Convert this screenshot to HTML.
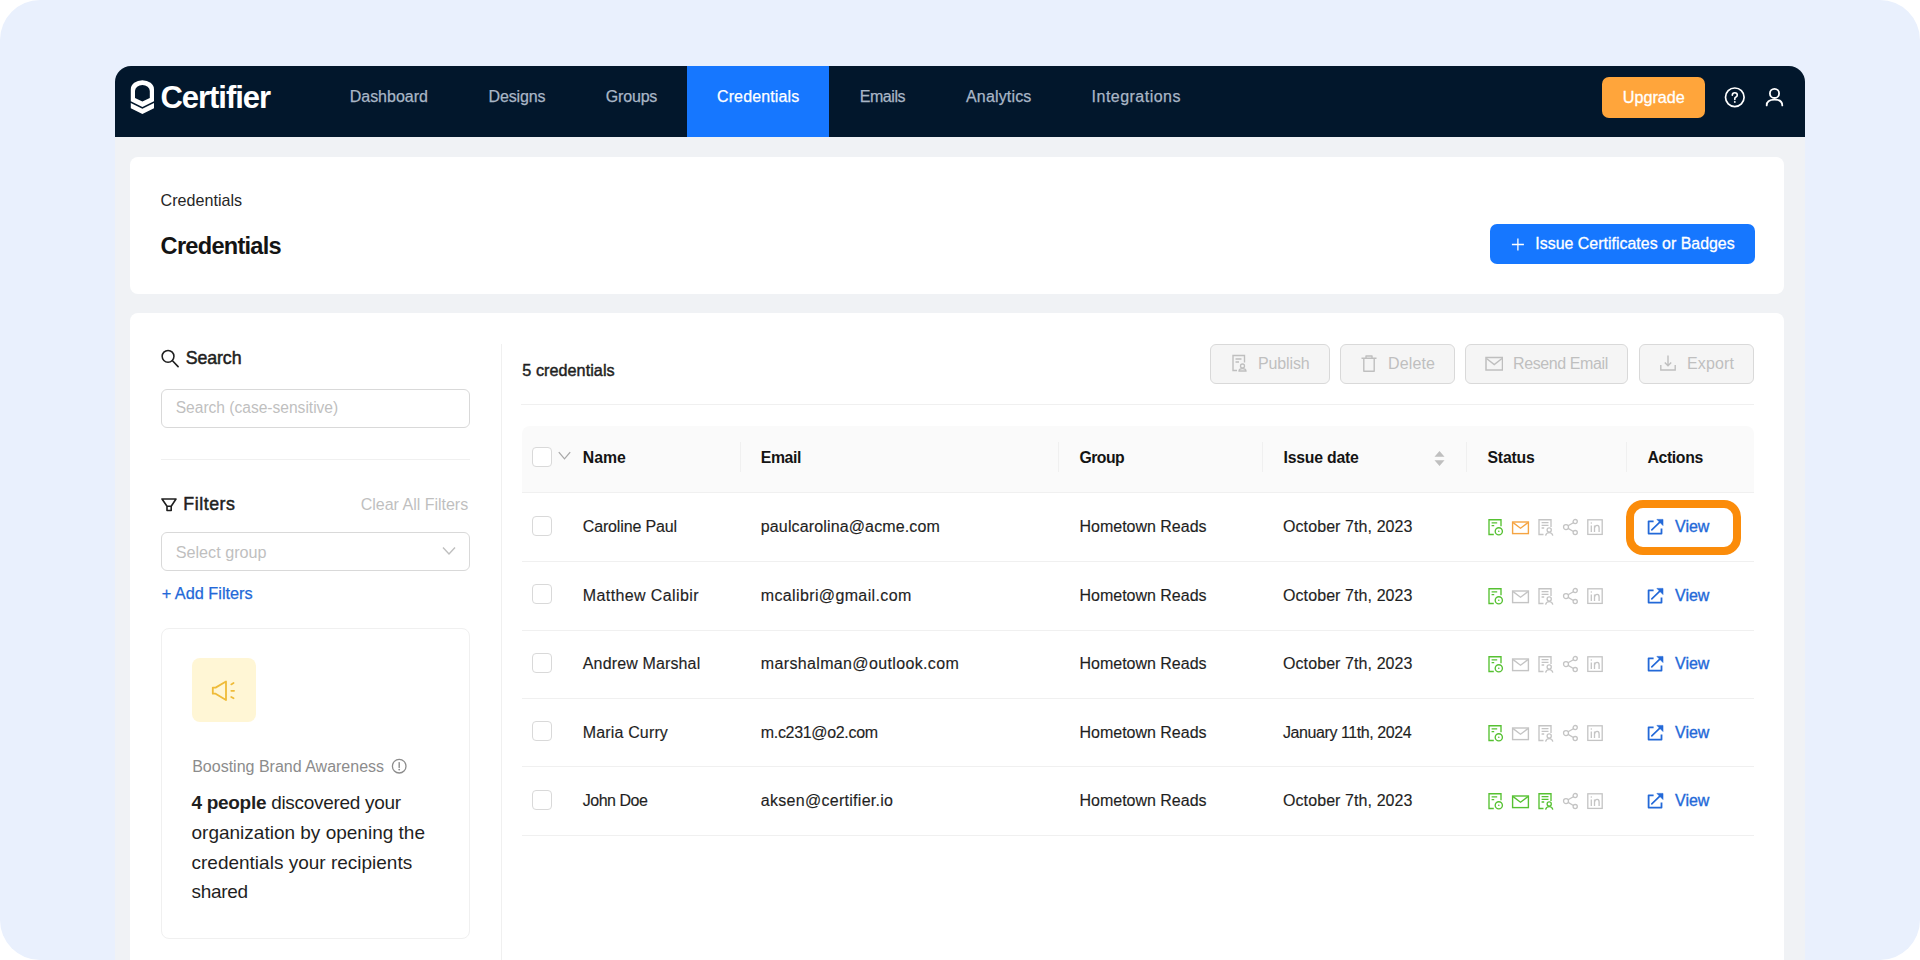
<!DOCTYPE html>
<html><head><meta charset="utf-8"><title>Certifier Credentials</title>
<style>
html,body{margin:0;padding:0;}
body{width:1920px;height:960px;overflow:hidden;position:relative;background:#fff;font-family:"Liberation Sans",sans-serif;}
.t{position:absolute;white-space:nowrap;}
.b{position:absolute;}
</style></head><body>
<div class="b" style="left:0px;top:0px;width:1920px;height:960px;background:#e9f0fd;border-radius:40px;"></div>
<div class="b" style="left:115px;top:66px;width:1690px;height:894px;background:#f0f2f5;border-radius:16px 16px 0 0;"></div>
<div class="b" style="left:115px;top:66px;width:1690px;height:71px;background:#02172c;border-radius:16px 16px 0 0;"></div>
<div class="b" style="left:687px;top:66px;width:142px;height:71px;background:#1677ff;"></div>
<svg class="b" style="left:130px;top:80px;" width="25" height="35" viewBox="0 0 25 35" fill="none"><path fill="#fff" fill-rule="evenodd" d="M0.8,21.3 V9.2 A11.6,9 0 0 1 24,9.2 V21.3 L12.4,27.1 Z M5,17.9 V11 A7.4,6 0 0 1 19.8,11 V17.9 L12.4,21.6 Z"/><path fill="#fff" d="M0.8,23 L12.4,28.8 L24,23 V28.2 L12.4,34 L0.8,28.2 Z"/></svg>
<div class="t" style="left:160.5px;top:83.10px;font-size:31px;line-height:30px;font-weight:700;color:#fff;letter-spacing:-1.05px;">Certifier</div>
<div class="t" style="left:349.7px;top:87.30px;font-size:16px;line-height:20px;font-weight:400;color:#a9b6c6;letter-spacing:-0.006px;-webkit-text-stroke:0.25px currentColor;">Dashboard</div>
<div class="t" style="left:488.5px;top:87.30px;font-size:16px;line-height:20px;font-weight:400;color:#a9b6c6;letter-spacing:-0.142px;-webkit-text-stroke:0.25px currentColor;">Designs</div>
<div class="t" style="left:605.8px;top:87.30px;font-size:16px;line-height:20px;font-weight:400;color:#a9b6c6;letter-spacing:-0.18px;-webkit-text-stroke:0.25px currentColor;">Groups</div>
<div class="t" style="left:717px;top:87.30px;font-size:16px;line-height:20px;font-weight:400;color:#fff;letter-spacing:0.12px;-webkit-text-stroke:0.25px currentColor;">Credentials</div>
<div class="t" style="left:859.7px;top:87.30px;font-size:16px;line-height:20px;font-weight:400;color:#a9b6c6;letter-spacing:-0.42px;-webkit-text-stroke:0.25px currentColor;">Emails</div>
<div class="t" style="left:966px;top:87.30px;font-size:16px;line-height:20px;font-weight:400;color:#a9b6c6;letter-spacing:0.162px;-webkit-text-stroke:0.25px currentColor;">Analytics</div>
<div class="t" style="left:1091.6px;top:87.30px;font-size:16px;line-height:20px;font-weight:400;color:#a9b6c6;letter-spacing:0.473px;-webkit-text-stroke:0.25px currentColor;">Integrations</div>
<div class="b" style="left:1602px;top:77px;width:103px;height:41px;background:#ffa53b;border-radius:7px;"></div>
<div class="t" style="left:1622.7px;top:86.80px;font-size:16.2px;line-height:20px;font-weight:400;color:#fff;letter-spacing:0.008px;-webkit-text-stroke:0.3px #fff;">Upgrade</div>
<svg class="b" style="left:1724px;top:87px;" width="22" height="22" viewBox="0 0 22 22" fill="none"><circle cx="10.8" cy="10.3" r="9.3" stroke="#fff" stroke-width="1.7"/><path d="M8.3,8.2 Q8.3,5.8 10.8,5.8 Q13.3,5.8 13.3,8.1 Q13.3,9.6 11.7,10.3 Q10.8,10.7 10.8,11.8 L10.8,12.4" stroke="#fff" stroke-width="1.6" stroke-linecap="round"/><circle cx="10.8" cy="14.9" r="0.95" fill="#fff"/></svg>
<svg class="b" style="left:1764px;top:86px;" width="22" height="22" viewBox="0 0 22 22" fill="none"><circle cx="10.5" cy="7.4" r="4.6" stroke="#fff" stroke-width="1.8"/><path d="M2.7,19.4 C2.7,15.5 6.2,13.6 10.5,13.6 C14.8,13.6 18.3,15.5 18.3,19.4" stroke="#fff" stroke-width="1.8" stroke-linecap="round"/></svg>
<div class="b" style="left:130px;top:157px;width:1654px;height:137px;background:#fff;border-radius:8px;"></div>
<div class="t" style="left:160.6px;top:190.00px;font-size:16.1px;line-height:20px;font-weight:400;color:#262626;letter-spacing:0.01px;">Credentials</div>
<div class="t" style="left:160.6px;top:231.60px;font-size:23.6px;line-height:28px;font-weight:700;color:#141414;letter-spacing:-0.74px;">Credentials</div>
<div class="b" style="left:1490px;top:224px;width:265px;height:40px;background:#1677ff;border-radius:7px;"></div>
<svg class="b" style="left:1511px;top:238px;" width="14" height="14" viewBox="0 0 14 14" fill="none"><path d="M6.9,0.5 V12.5 M0.9,6.5 H12.9" stroke="#fff" stroke-width="1.3"/></svg>
<div class="t" style="left:1535.3px;top:234.00px;font-size:15.9px;line-height:20px;font-weight:400;color:#fff;letter-spacing:0.024px;-webkit-text-stroke:0.3px #fff;">Issue Certificates or Badges</div>
<div class="b" style="left:130px;top:313px;width:1654px;height:700px;background:#fff;border-radius:8px;"></div>
<svg class="b" style="left:160px;top:349px;" width="20" height="20" viewBox="0 0 20 20" fill="none"><circle cx="8.05" cy="7.3" r="5.9" stroke="#1f1f1f" stroke-width="1.55"/><path d="M12.5,11.8 L18.1,17.6" stroke="#1f1f1f" stroke-width="1.65" stroke-linecap="round"/></svg>
<div class="t" style="left:185.7px;top:348.00px;font-size:17.8px;line-height:20px;font-weight:400;color:#1f1f1f;letter-spacing:-0.1px;-webkit-text-stroke:0.5px #1f1f1f;">Search</div>
<div class="b" style="left:161px;top:389px;width:309px;height:39px;border:1px solid #d9d9d9;border-radius:6px;box-sizing:border-box;"></div>
<div class="t" style="left:175.7px;top:398.00px;font-size:15.6px;line-height:20px;font-weight:400;color:#bfbfbf;letter-spacing:-0.018px;">Search (case-sensitive)</div>
<div class="b" style="left:161px;top:459px;width:309px;height:1px;background:#f0f0f0;"></div>
<svg class="b" style="left:160px;top:496px;" width="18" height="18" viewBox="0 0 18 18" fill="none"><path d="M2,3 H16 L11.2,10.2 V14.5 H7 V10.2 Z M7,10.2 H11.2" stroke="#1f1f1f" stroke-width="1.6" stroke-linejoin="round"/></svg>
<div class="t" style="left:183.3px;top:494.00px;font-size:17.8px;line-height:20px;font-weight:400;color:#1f1f1f;letter-spacing:0.533px;-webkit-text-stroke:0.5px #1f1f1f;">Filters</div>
<div class="t" style="left:360.7px;top:494.00px;font-size:16.06px;line-height:20px;font-weight:400;color:#bfbfbf;letter-spacing:-0.025px;">Clear All Filters</div>
<div class="b" style="left:161px;top:532px;width:309px;height:39px;border:1px solid #d9d9d9;border-radius:6px;box-sizing:border-box;"></div>
<div class="t" style="left:175.7px;top:541.50px;font-size:16.2px;line-height:20px;font-weight:400;color:#bfbfbf;letter-spacing:0.0px;">Select group</div>
<svg class="b" style="left:442px;top:545px;" width="14" height="12" viewBox="0 0 14 12" fill="none"><path d="M1,2.5 L7,9 L13,2.5" stroke="#bfbfbf" stroke-width="1.4"/></svg>
<div class="t" style="left:161.7px;top:583.30px;font-size:16.3px;line-height:20px;font-weight:400;color:#2369d8;letter-spacing:0.0px;-webkit-text-stroke:0.25px currentColor;">+ Add Filters</div>
<div class="b" style="left:161px;top:628px;width:309px;height:311px;border:1px solid #f0f0f0;border-radius:8px;box-sizing:border-box;"></div>
<div class="b" style="left:192px;top:658px;width:64px;height:64px;background:#fff6d5;border-radius:8px;"></div>
<svg class="b" style="left:210px;top:679px;" width="28" height="24" viewBox="0 0 28 24" fill="none"><path d="M2.8,8.6 H5.6 L16,2.5 V21 L5.6,14.7 H2.8 Z" stroke="#efbb38" stroke-width="1.8" stroke-linejoin="round"/><path d="M21.2,5.4 L23.6,4 M21.3,11.8 H24.1 M21.2,17.9 L23.6,19.3" stroke="#efbb38" stroke-width="1.7" stroke-linecap="round"/></svg>
<div class="t" style="left:192.2px;top:756.80px;font-size:16px;line-height:20px;font-weight:400;color:#8c8c8c;letter-spacing:0.002px;">Boosting Brand Awareness</div>
<svg class="b" style="left:391px;top:758px;" width="17" height="17" viewBox="0 0 17 17" fill="none"><circle cx="8.2" cy="8.2" r="6.8" stroke="#8c8c8c" stroke-width="1.3"/><path d="M8.2,4.6 V9.4" stroke="#8c8c8c" stroke-width="1.4" stroke-linecap="round"/><circle cx="8.2" cy="11.6" r="0.9" fill="#8c8c8c"/></svg>
<div class="t" style="left:191.5px;top:787.7px;width:270px;font-size:19px;line-height:29.9px;color:#1f1f1f;white-space:normal;"><span style="letter-spacing:-0.3px"><b>4 people</b> discovered your</span><br>organization by opening the<br>credentials your recipients<br><span style="letter-spacing:-0.3px">shared</span></div>
<div class="b" style="left:501px;top:344px;width:1px;height:616px;background:#f0f0f0;"></div>
<div class="t" style="left:522.3px;top:360.00px;font-size:16.2px;line-height:20px;font-weight:400;color:#1f1f1f;letter-spacing:0.046px;-webkit-text-stroke:0.45px #1f1f1f;">5 credentials</div>
<div class="b" style="left:1210px;top:344px;width:120px;height:40px;background:#f5f5f5;border:1px solid #d9d9d9;border-radius:6px;box-sizing:border-box;"></div>
<svg class="b" style="left:1231px;top:354px;" width="18" height="18" viewBox="0 0 18 18" fill="none"><path d="M13.5,8.5 V1.5 H2 V16.5 H6" stroke="#bfbfbf" stroke-width="1.4"/><path d="M4.5,5 H10.5 M4.5,8 H8" stroke="#bfbfbf" stroke-width="1.4"/><circle cx="11.5" cy="12" r="2" stroke="#bfbfbf" stroke-width="1.3"/><path d="M8,17 Q8,14.6 11.5,14.6 Q15,14.6 15,17 Z" stroke="#bfbfbf" stroke-width="1.3"/></svg>
<div class="t" style="left:1258px;top:353.90px;font-size:16px;line-height:20px;font-weight:400;color:#bfbfbf;letter-spacing:-0.133px;">Publish</div>
<div class="b" style="left:1340px;top:344px;width:115px;height:40px;background:#f5f5f5;border:1px solid #d9d9d9;border-radius:6px;box-sizing:border-box;"></div>
<svg class="b" style="left:1359.5px;top:354px;" width="18" height="18" viewBox="0 0 18 18" fill="none"><path d="M1.5,4.3 H16.5 M6,4.3 V2 H12 V4.3 M3.8,4.3 V17.2 H14.2 V4.3" stroke="#bfbfbf" stroke-width="1.4" stroke-linejoin="round"/></svg>
<div class="t" style="left:1388px;top:353.90px;font-size:16px;line-height:20px;font-weight:400;color:#bfbfbf;letter-spacing:0.15px;">Delete</div>
<div class="b" style="left:1465px;top:344px;width:163px;height:40px;background:#f5f5f5;border:1px solid #d9d9d9;border-radius:6px;box-sizing:border-box;"></div>
<svg class="b" style="left:1484.5px;top:354px;" width="18" height="18" viewBox="0 0 18 18" fill="none"><rect x="1" y="3.5" width="16.5" height="12.5" stroke="#bfbfbf" stroke-width="1.5"/><path d="M1.5,4.5 L9.25,10.5 L17,4.5" stroke="#bfbfbf" stroke-width="1.5"/></svg>
<div class="t" style="left:1513.1px;top:353.90px;font-size:16px;line-height:20px;font-weight:400;color:#bfbfbf;letter-spacing:-0.409px;">Resend Email</div>
<div class="b" style="left:1639px;top:344px;width:115px;height:40px;background:#f5f5f5;border:1px solid #d9d9d9;border-radius:6px;box-sizing:border-box;"></div>
<svg class="b" style="left:1658.5px;top:354px;" width="18" height="18" viewBox="0 0 18 18" fill="none"><path d="M9,1.5 V11.5 M5.8,8.5 L9,11.7 L12.2,8.5 M1.8,11 V16 H16.2 V11" stroke="#bfbfbf" stroke-width="1.4"/></svg>
<div class="t" style="left:1687px;top:353.90px;font-size:16px;line-height:20px;font-weight:400;color:#bfbfbf;letter-spacing:0.15px;">Export</div>
<div class="b" style="left:521px;top:404px;width:1233px;height:1px;background:#f0f0f0;"></div>
<div class="b" style="left:522px;top:426px;width:1232px;height:67px;background:#fafafa;border-radius:8px 8px 0 0;border-bottom:1px solid #f0f0f0;box-sizing:border-box;"></div>
<div class="b" style="left:532px;top:447px;width:20px;height:20px;background:#fff;border:1px solid #d9d9d9;border-radius:4px;box-sizing:border-box;"></div>
<svg class="b" style="left:557px;top:450px;" width="15" height="12" viewBox="0 0 15 12" fill="none"><path d="M1.8,2.2 L7.5,8.8 L13.2,2.2" stroke="#a8a8a8" stroke-width="1.3"/></svg>
<div class="b" style="left:740px;top:442px;width:1px;height:30px;background:#f0f0f0;"></div>
<div class="b" style="left:1058px;top:442px;width:1px;height:30px;background:#f0f0f0;"></div>
<div class="b" style="left:1262px;top:442px;width:1px;height:30px;background:#f0f0f0;"></div>
<div class="b" style="left:1466px;top:442px;width:1px;height:30px;background:#f0f0f0;"></div>
<div class="b" style="left:1626px;top:442px;width:1px;height:30px;background:#f0f0f0;"></div>
<div class="t" style="left:582.7px;top:448.30px;font-size:15.8px;line-height:20px;font-weight:700;color:#141414;letter-spacing:0.033px;">Name</div>
<div class="t" style="left:760.8px;top:448.30px;font-size:15.8px;line-height:20px;font-weight:700;color:#141414;letter-spacing:-0.387px;">Email</div>
<div class="t" style="left:1079.4px;top:448.30px;font-size:15.8px;line-height:20px;font-weight:700;color:#141414;letter-spacing:-0.5px;">Group</div>
<div class="t" style="left:1283.6px;top:448.30px;font-size:15.8px;line-height:20px;font-weight:700;color:#141414;letter-spacing:-0.228px;">Issue date</div>
<div class="t" style="left:1487.5px;top:448.30px;font-size:15.8px;line-height:20px;font-weight:700;color:#141414;letter-spacing:-0.21px;">Status</div>
<div class="t" style="left:1647.5px;top:448.30px;font-size:15.8px;line-height:20px;font-weight:700;color:#141414;letter-spacing:-0.367px;">Actions</div>
<svg class="b" style="left:1433px;top:450px;" width="13" height="17" viewBox="0 0 13 17" fill="none"><path d="M6.5,1 L11.5,6.8 H1.5 Z M6.5,16 L11.5,10.2 H1.5 Z" fill="#bfbfbf"/></svg>
<div class="b" style="left:522px;top:561px;width:1232px;height:1px;background:#f0f0f0;"></div>
<div class="b" style="left:532px;top:516px;width:20px;height:20px;background:#fff;border:1px solid #d9d9d9;border-radius:4px;box-sizing:border-box;"></div>
<div class="t" style="left:582.8px;top:517.30px;font-size:16px;line-height:20px;font-weight:400;color:#1f1f1f;letter-spacing:-0.158px;-webkit-text-stroke:0.15px #1f1f1f;">Caroline Paul</div>
<div class="t" style="left:760.8px;top:517.30px;font-size:16px;line-height:20px;font-weight:400;color:#1f1f1f;letter-spacing:0.138px;-webkit-text-stroke:0.15px #1f1f1f;">paulcarolina@acme.com</div>
<div class="t" style="left:1079.5px;top:517.30px;font-size:16px;line-height:20px;font-weight:400;color:#1f1f1f;letter-spacing:-0.012px;-webkit-text-stroke:0.15px #1f1f1f;">Hometown Reads</div>
<div class="t" style="left:1283px;top:517.30px;font-size:16px;line-height:20px;font-weight:400;color:#1f1f1f;letter-spacing:0.088px;-webkit-text-stroke:0.15px #1f1f1f;">October 7th, 2023</div>
<svg class="b" style="left:1487px;top:518.0px;" width="18" height="18" viewBox="0 0 18 18" fill="none"><path d="M14,8.2 V1.7 H2 V16.5 H6.8" stroke="#56c132" stroke-width="1.35"/><path d="M4.6,4.8 H10.2 M4.6,7.6 H7.2" stroke="#56c132" stroke-width="1.3"/><circle cx="11.8" cy="13.3" r="3.6" stroke="#56c132" stroke-width="1.35"/><circle cx="11.8" cy="13.3" r="0.8" fill="#56c132"/></svg>
<svg class="b" style="left:1511px;top:518.0px;" width="19" height="18" viewBox="0 0 19 18" fill="none"><rect x="1.6" y="4" width="15.8" height="11.6" stroke="#f5a442" stroke-width="1.4"/><path d="M2.1,4.6 L9.5,10.2 L16.9,4.6" stroke="#f5a442" stroke-width="1.35"/></svg>
<svg class="b" style="left:1537px;top:518.0px;" width="18" height="18" viewBox="0 0 18 18" fill="none"><path d="M14,9 V1.7 H2 V16.5 H6.5" stroke="#c4c4c4" stroke-width="1.35"/><path d="M4.6,4.6 H11.5 M4.6,7.3 H11.5 M4.6,10 H7.2" stroke="#c4c4c4" stroke-width="1.3"/><circle cx="12.2" cy="12" r="2.1" stroke="#c4c4c4" stroke-width="1.3"/><path d="M8.6,17.6 Q9.2,14.6 12.2,14.6 Q15.2,14.6 15.8,17.6" stroke="#c4c4c4" stroke-width="1.3"/></svg>
<svg class="b" style="left:1562px;top:518.0px;" width="17" height="18" viewBox="0 0 17 18" fill="none"><circle cx="4" cy="9.1" r="2.5" stroke="#c4c4c4" stroke-width="1.3"/><circle cx="13.2" cy="3.6" r="2.1" stroke="#c4c4c4" stroke-width="1.3"/><circle cx="13.2" cy="14.6" r="2.1" stroke="#c4c4c4" stroke-width="1.3"/><path d="M6.1,7.8 L11.4,4.7 M6.1,10.4 L11.4,13.5" stroke="#c4c4c4" stroke-width="1.3"/></svg>
<svg class="b" style="left:1586px;top:518.0px;" width="18" height="18" viewBox="0 0 18 18" fill="none"><rect x="1.8" y="1.8" width="14.4" height="14.6" stroke="#c4c4c4" stroke-width="1.3"/><path d="M5.3,7.5 V14 M8.5,14 V7.5 M8.5,10 Q9.1,7.4 11.1,7.4 Q13.1,7.4 13.1,10 V14" stroke="#c4c4c4" stroke-width="1.3"/><circle cx="5.3" cy="5" r="0.75" fill="#c4c4c4"/></svg>
<svg class="b" style="left:1646px;top:517.3px;" width="19" height="19" viewBox="0 0 19 19" fill="none"><path d="M7.6,4.3 H2.6 V16.6 H15.5 V11.4" stroke="#2369d8" stroke-width="1.8" stroke-linejoin="round"/><path d="M5.8,12.9 L14.6,4.4" stroke="#2369d8" stroke-width="1.6" stroke-linecap="round"/><path d="M10.9,2.4 H17 V8.5 Z" fill="#2369d8" stroke="#2369d8" stroke-width="0.6" stroke-linejoin="round"/></svg>
<div class="t" style="left:1675px;top:517.30px;font-size:16px;line-height:20px;font-weight:400;color:#2369d8;letter-spacing:0.0px;-webkit-text-stroke:0.35px currentColor;">View</div>
<div class="b" style="left:522px;top:630px;width:1232px;height:1px;background:#f0f0f0;"></div>
<div class="b" style="left:532px;top:584px;width:20px;height:20px;background:#fff;border:1px solid #d9d9d9;border-radius:4px;box-sizing:border-box;"></div>
<div class="t" style="left:582.8px;top:585.80px;font-size:16px;line-height:20px;font-weight:400;color:#1f1f1f;letter-spacing:0.389px;-webkit-text-stroke:0.15px #1f1f1f;">Matthew Calibir</div>
<div class="t" style="left:760.8px;top:585.80px;font-size:16px;line-height:20px;font-weight:400;color:#1f1f1f;letter-spacing:0.362px;-webkit-text-stroke:0.15px #1f1f1f;">mcalibri@gmail.com</div>
<div class="t" style="left:1079.5px;top:585.80px;font-size:16px;line-height:20px;font-weight:400;color:#1f1f1f;letter-spacing:-0.012px;-webkit-text-stroke:0.15px #1f1f1f;">Hometown Reads</div>
<div class="t" style="left:1283px;top:585.80px;font-size:16px;line-height:20px;font-weight:400;color:#1f1f1f;letter-spacing:0.088px;-webkit-text-stroke:0.15px #1f1f1f;">October 7th, 2023</div>
<svg class="b" style="left:1487px;top:586.5px;" width="18" height="18" viewBox="0 0 18 18" fill="none"><path d="M14,8.2 V1.7 H2 V16.5 H6.8" stroke="#56c132" stroke-width="1.35"/><path d="M4.6,4.8 H10.2 M4.6,7.6 H7.2" stroke="#56c132" stroke-width="1.3"/><circle cx="11.8" cy="13.3" r="3.6" stroke="#56c132" stroke-width="1.35"/><circle cx="11.8" cy="13.3" r="0.8" fill="#56c132"/></svg>
<svg class="b" style="left:1511px;top:586.5px;" width="19" height="18" viewBox="0 0 19 18" fill="none"><rect x="1.6" y="4" width="15.8" height="11.6" stroke="#c4c4c4" stroke-width="1.4"/><path d="M2.1,4.6 L9.5,10.2 L16.9,4.6" stroke="#c4c4c4" stroke-width="1.35"/></svg>
<svg class="b" style="left:1537px;top:586.5px;" width="18" height="18" viewBox="0 0 18 18" fill="none"><path d="M14,9 V1.7 H2 V16.5 H6.5" stroke="#c4c4c4" stroke-width="1.35"/><path d="M4.6,4.6 H11.5 M4.6,7.3 H11.5 M4.6,10 H7.2" stroke="#c4c4c4" stroke-width="1.3"/><circle cx="12.2" cy="12" r="2.1" stroke="#c4c4c4" stroke-width="1.3"/><path d="M8.6,17.6 Q9.2,14.6 12.2,14.6 Q15.2,14.6 15.8,17.6" stroke="#c4c4c4" stroke-width="1.3"/></svg>
<svg class="b" style="left:1562px;top:586.5px;" width="17" height="18" viewBox="0 0 17 18" fill="none"><circle cx="4" cy="9.1" r="2.5" stroke="#c4c4c4" stroke-width="1.3"/><circle cx="13.2" cy="3.6" r="2.1" stroke="#c4c4c4" stroke-width="1.3"/><circle cx="13.2" cy="14.6" r="2.1" stroke="#c4c4c4" stroke-width="1.3"/><path d="M6.1,7.8 L11.4,4.7 M6.1,10.4 L11.4,13.5" stroke="#c4c4c4" stroke-width="1.3"/></svg>
<svg class="b" style="left:1586px;top:586.5px;" width="18" height="18" viewBox="0 0 18 18" fill="none"><rect x="1.8" y="1.8" width="14.4" height="14.6" stroke="#c4c4c4" stroke-width="1.3"/><path d="M5.3,7.5 V14 M8.5,14 V7.5 M8.5,10 Q9.1,7.4 11.1,7.4 Q13.1,7.4 13.1,10 V14" stroke="#c4c4c4" stroke-width="1.3"/><circle cx="5.3" cy="5" r="0.75" fill="#c4c4c4"/></svg>
<svg class="b" style="left:1646px;top:585.8px;" width="19" height="19" viewBox="0 0 19 19" fill="none"><path d="M7.6,4.3 H2.6 V16.6 H15.5 V11.4" stroke="#2369d8" stroke-width="1.8" stroke-linejoin="round"/><path d="M5.8,12.9 L14.6,4.4" stroke="#2369d8" stroke-width="1.6" stroke-linecap="round"/><path d="M10.9,2.4 H17 V8.5 Z" fill="#2369d8" stroke="#2369d8" stroke-width="0.6" stroke-linejoin="round"/></svg>
<div class="t" style="left:1675px;top:585.80px;font-size:16px;line-height:20px;font-weight:400;color:#2369d8;letter-spacing:0.0px;-webkit-text-stroke:0.35px currentColor;">View</div>
<div class="b" style="left:522px;top:698px;width:1232px;height:1px;background:#f0f0f0;"></div>
<div class="b" style="left:532px;top:653px;width:20px;height:20px;background:#fff;border:1px solid #d9d9d9;border-radius:4px;box-sizing:border-box;"></div>
<div class="t" style="left:582.8px;top:654.30px;font-size:16px;line-height:20px;font-weight:400;color:#1f1f1f;letter-spacing:0.138px;-webkit-text-stroke:0.15px #1f1f1f;">Andrew Marshal</div>
<div class="t" style="left:760.8px;top:654.30px;font-size:16px;line-height:20px;font-weight:400;color:#1f1f1f;letter-spacing:0.352px;-webkit-text-stroke:0.15px #1f1f1f;">marshalman@outlook.com</div>
<div class="t" style="left:1079.5px;top:654.30px;font-size:16px;line-height:20px;font-weight:400;color:#1f1f1f;letter-spacing:-0.012px;-webkit-text-stroke:0.15px #1f1f1f;">Hometown Reads</div>
<div class="t" style="left:1283px;top:654.30px;font-size:16px;line-height:20px;font-weight:400;color:#1f1f1f;letter-spacing:0.088px;-webkit-text-stroke:0.15px #1f1f1f;">October 7th, 2023</div>
<svg class="b" style="left:1487px;top:655.0px;" width="18" height="18" viewBox="0 0 18 18" fill="none"><path d="M14,8.2 V1.7 H2 V16.5 H6.8" stroke="#56c132" stroke-width="1.35"/><path d="M4.6,4.8 H10.2 M4.6,7.6 H7.2" stroke="#56c132" stroke-width="1.3"/><circle cx="11.8" cy="13.3" r="3.6" stroke="#56c132" stroke-width="1.35"/><circle cx="11.8" cy="13.3" r="0.8" fill="#56c132"/></svg>
<svg class="b" style="left:1511px;top:655.0px;" width="19" height="18" viewBox="0 0 19 18" fill="none"><rect x="1.6" y="4" width="15.8" height="11.6" stroke="#c4c4c4" stroke-width="1.4"/><path d="M2.1,4.6 L9.5,10.2 L16.9,4.6" stroke="#c4c4c4" stroke-width="1.35"/></svg>
<svg class="b" style="left:1537px;top:655.0px;" width="18" height="18" viewBox="0 0 18 18" fill="none"><path d="M14,9 V1.7 H2 V16.5 H6.5" stroke="#c4c4c4" stroke-width="1.35"/><path d="M4.6,4.6 H11.5 M4.6,7.3 H11.5 M4.6,10 H7.2" stroke="#c4c4c4" stroke-width="1.3"/><circle cx="12.2" cy="12" r="2.1" stroke="#c4c4c4" stroke-width="1.3"/><path d="M8.6,17.6 Q9.2,14.6 12.2,14.6 Q15.2,14.6 15.8,17.6" stroke="#c4c4c4" stroke-width="1.3"/></svg>
<svg class="b" style="left:1562px;top:655.0px;" width="17" height="18" viewBox="0 0 17 18" fill="none"><circle cx="4" cy="9.1" r="2.5" stroke="#c4c4c4" stroke-width="1.3"/><circle cx="13.2" cy="3.6" r="2.1" stroke="#c4c4c4" stroke-width="1.3"/><circle cx="13.2" cy="14.6" r="2.1" stroke="#c4c4c4" stroke-width="1.3"/><path d="M6.1,7.8 L11.4,4.7 M6.1,10.4 L11.4,13.5" stroke="#c4c4c4" stroke-width="1.3"/></svg>
<svg class="b" style="left:1586px;top:655.0px;" width="18" height="18" viewBox="0 0 18 18" fill="none"><rect x="1.8" y="1.8" width="14.4" height="14.6" stroke="#c4c4c4" stroke-width="1.3"/><path d="M5.3,7.5 V14 M8.5,14 V7.5 M8.5,10 Q9.1,7.4 11.1,7.4 Q13.1,7.4 13.1,10 V14" stroke="#c4c4c4" stroke-width="1.3"/><circle cx="5.3" cy="5" r="0.75" fill="#c4c4c4"/></svg>
<svg class="b" style="left:1646px;top:654.3px;" width="19" height="19" viewBox="0 0 19 19" fill="none"><path d="M7.6,4.3 H2.6 V16.6 H15.5 V11.4" stroke="#2369d8" stroke-width="1.8" stroke-linejoin="round"/><path d="M5.8,12.9 L14.6,4.4" stroke="#2369d8" stroke-width="1.6" stroke-linecap="round"/><path d="M10.9,2.4 H17 V8.5 Z" fill="#2369d8" stroke="#2369d8" stroke-width="0.6" stroke-linejoin="round"/></svg>
<div class="t" style="left:1675px;top:654.30px;font-size:16px;line-height:20px;font-weight:400;color:#2369d8;letter-spacing:0.0px;-webkit-text-stroke:0.35px currentColor;">View</div>
<div class="b" style="left:522px;top:766px;width:1232px;height:1px;background:#f0f0f0;"></div>
<div class="b" style="left:532px;top:721px;width:20px;height:20px;background:#fff;border:1px solid #d9d9d9;border-radius:4px;box-sizing:border-box;"></div>
<div class="t" style="left:582.8px;top:722.80px;font-size:16px;line-height:20px;font-weight:400;color:#1f1f1f;letter-spacing:0.15px;-webkit-text-stroke:0.15px #1f1f1f;">Maria Curry</div>
<div class="t" style="left:760.8px;top:722.80px;font-size:16px;line-height:20px;font-weight:400;color:#1f1f1f;letter-spacing:-0.329px;-webkit-text-stroke:0.15px #1f1f1f;">m.c231@o2.com</div>
<div class="t" style="left:1079.5px;top:722.80px;font-size:16px;line-height:20px;font-weight:400;color:#1f1f1f;letter-spacing:-0.012px;-webkit-text-stroke:0.15px #1f1f1f;">Hometown Reads</div>
<div class="t" style="left:1283px;top:722.80px;font-size:16px;line-height:20px;font-weight:400;color:#1f1f1f;letter-spacing:-0.421px;-webkit-text-stroke:0.15px #1f1f1f;">January 11th, 2024</div>
<svg class="b" style="left:1487px;top:723.5px;" width="18" height="18" viewBox="0 0 18 18" fill="none"><path d="M14,8.2 V1.7 H2 V16.5 H6.8" stroke="#56c132" stroke-width="1.35"/><path d="M4.6,4.8 H10.2 M4.6,7.6 H7.2" stroke="#56c132" stroke-width="1.3"/><circle cx="11.8" cy="13.3" r="3.6" stroke="#56c132" stroke-width="1.35"/><circle cx="11.8" cy="13.3" r="0.8" fill="#56c132"/></svg>
<svg class="b" style="left:1511px;top:723.5px;" width="19" height="18" viewBox="0 0 19 18" fill="none"><rect x="1.6" y="4" width="15.8" height="11.6" stroke="#c4c4c4" stroke-width="1.4"/><path d="M2.1,4.6 L9.5,10.2 L16.9,4.6" stroke="#c4c4c4" stroke-width="1.35"/></svg>
<svg class="b" style="left:1537px;top:723.5px;" width="18" height="18" viewBox="0 0 18 18" fill="none"><path d="M14,9 V1.7 H2 V16.5 H6.5" stroke="#c4c4c4" stroke-width="1.35"/><path d="M4.6,4.6 H11.5 M4.6,7.3 H11.5 M4.6,10 H7.2" stroke="#c4c4c4" stroke-width="1.3"/><circle cx="12.2" cy="12" r="2.1" stroke="#c4c4c4" stroke-width="1.3"/><path d="M8.6,17.6 Q9.2,14.6 12.2,14.6 Q15.2,14.6 15.8,17.6" stroke="#c4c4c4" stroke-width="1.3"/></svg>
<svg class="b" style="left:1562px;top:723.5px;" width="17" height="18" viewBox="0 0 17 18" fill="none"><circle cx="4" cy="9.1" r="2.5" stroke="#c4c4c4" stroke-width="1.3"/><circle cx="13.2" cy="3.6" r="2.1" stroke="#c4c4c4" stroke-width="1.3"/><circle cx="13.2" cy="14.6" r="2.1" stroke="#c4c4c4" stroke-width="1.3"/><path d="M6.1,7.8 L11.4,4.7 M6.1,10.4 L11.4,13.5" stroke="#c4c4c4" stroke-width="1.3"/></svg>
<svg class="b" style="left:1586px;top:723.5px;" width="18" height="18" viewBox="0 0 18 18" fill="none"><rect x="1.8" y="1.8" width="14.4" height="14.6" stroke="#c4c4c4" stroke-width="1.3"/><path d="M5.3,7.5 V14 M8.5,14 V7.5 M8.5,10 Q9.1,7.4 11.1,7.4 Q13.1,7.4 13.1,10 V14" stroke="#c4c4c4" stroke-width="1.3"/><circle cx="5.3" cy="5" r="0.75" fill="#c4c4c4"/></svg>
<svg class="b" style="left:1646px;top:722.8px;" width="19" height="19" viewBox="0 0 19 19" fill="none"><path d="M7.6,4.3 H2.6 V16.6 H15.5 V11.4" stroke="#2369d8" stroke-width="1.8" stroke-linejoin="round"/><path d="M5.8,12.9 L14.6,4.4" stroke="#2369d8" stroke-width="1.6" stroke-linecap="round"/><path d="M10.9,2.4 H17 V8.5 Z" fill="#2369d8" stroke="#2369d8" stroke-width="0.6" stroke-linejoin="round"/></svg>
<div class="t" style="left:1675px;top:722.80px;font-size:16px;line-height:20px;font-weight:400;color:#2369d8;letter-spacing:0.0px;-webkit-text-stroke:0.35px currentColor;">View</div>
<div class="b" style="left:522px;top:835px;width:1232px;height:1px;background:#f0f0f0;"></div>
<div class="b" style="left:532px;top:790px;width:20px;height:20px;background:#fff;border:1px solid #d9d9d9;border-radius:4px;box-sizing:border-box;"></div>
<div class="t" style="left:582.8px;top:791.30px;font-size:16px;line-height:20px;font-weight:400;color:#1f1f1f;letter-spacing:-0.5px;-webkit-text-stroke:0.15px #1f1f1f;">John Doe</div>
<div class="t" style="left:760.8px;top:791.30px;font-size:16px;line-height:20px;font-weight:400;color:#1f1f1f;letter-spacing:0.282px;-webkit-text-stroke:0.15px #1f1f1f;">aksen@certifier.io</div>
<div class="t" style="left:1079.5px;top:791.30px;font-size:16px;line-height:20px;font-weight:400;color:#1f1f1f;letter-spacing:-0.012px;-webkit-text-stroke:0.15px #1f1f1f;">Hometown Reads</div>
<div class="t" style="left:1283px;top:791.30px;font-size:16px;line-height:20px;font-weight:400;color:#1f1f1f;letter-spacing:0.088px;-webkit-text-stroke:0.15px #1f1f1f;">October 7th, 2023</div>
<svg class="b" style="left:1487px;top:792.0px;" width="18" height="18" viewBox="0 0 18 18" fill="none"><path d="M14,8.2 V1.7 H2 V16.5 H6.8" stroke="#56c132" stroke-width="1.35"/><path d="M4.6,4.8 H10.2 M4.6,7.6 H7.2" stroke="#56c132" stroke-width="1.3"/><circle cx="11.8" cy="13.3" r="3.6" stroke="#56c132" stroke-width="1.35"/><circle cx="11.8" cy="13.3" r="0.8" fill="#56c132"/></svg>
<svg class="b" style="left:1511px;top:792.0px;" width="19" height="18" viewBox="0 0 19 18" fill="none"><rect x="1.6" y="4" width="15.8" height="11.6" stroke="#56c132" stroke-width="1.4"/><path d="M2.1,4.6 L9.5,10.2 L16.9,4.6" stroke="#56c132" stroke-width="1.35"/></svg>
<svg class="b" style="left:1537px;top:792.0px;" width="18" height="18" viewBox="0 0 18 18" fill="none"><path d="M14,9 V1.7 H2 V16.5 H6.5" stroke="#56c132" stroke-width="1.35"/><path d="M4.6,4.6 H11.5 M4.6,7.3 H11.5 M4.6,10 H7.2" stroke="#56c132" stroke-width="1.3"/><circle cx="12.2" cy="12" r="2.1" stroke="#56c132" stroke-width="1.3"/><path d="M8.6,17.6 Q9.2,14.6 12.2,14.6 Q15.2,14.6 15.8,17.6" stroke="#56c132" stroke-width="1.3"/></svg>
<svg class="b" style="left:1562px;top:792.0px;" width="17" height="18" viewBox="0 0 17 18" fill="none"><circle cx="4" cy="9.1" r="2.5" stroke="#c4c4c4" stroke-width="1.3"/><circle cx="13.2" cy="3.6" r="2.1" stroke="#c4c4c4" stroke-width="1.3"/><circle cx="13.2" cy="14.6" r="2.1" stroke="#c4c4c4" stroke-width="1.3"/><path d="M6.1,7.8 L11.4,4.7 M6.1,10.4 L11.4,13.5" stroke="#c4c4c4" stroke-width="1.3"/></svg>
<svg class="b" style="left:1586px;top:792.0px;" width="18" height="18" viewBox="0 0 18 18" fill="none"><rect x="1.8" y="1.8" width="14.4" height="14.6" stroke="#c4c4c4" stroke-width="1.3"/><path d="M5.3,7.5 V14 M8.5,14 V7.5 M8.5,10 Q9.1,7.4 11.1,7.4 Q13.1,7.4 13.1,10 V14" stroke="#c4c4c4" stroke-width="1.3"/><circle cx="5.3" cy="5" r="0.75" fill="#c4c4c4"/></svg>
<svg class="b" style="left:1646px;top:791.3px;" width="19" height="19" viewBox="0 0 19 19" fill="none"><path d="M7.6,4.3 H2.6 V16.6 H15.5 V11.4" stroke="#2369d8" stroke-width="1.8" stroke-linejoin="round"/><path d="M5.8,12.9 L14.6,4.4" stroke="#2369d8" stroke-width="1.6" stroke-linecap="round"/><path d="M10.9,2.4 H17 V8.5 Z" fill="#2369d8" stroke="#2369d8" stroke-width="0.6" stroke-linejoin="round"/></svg>
<div class="t" style="left:1675px;top:791.30px;font-size:16px;line-height:20px;font-weight:400;color:#2369d8;letter-spacing:0.0px;-webkit-text-stroke:0.35px currentColor;">View</div>
<div class="b" style="left:1626px;top:500.2px;width:114.6px;height:55.1px;border:8.7px solid #fb8c0a;border-left-width:8.5px;border-radius:17px;box-sizing:border-box;"></div>
</body></html>
